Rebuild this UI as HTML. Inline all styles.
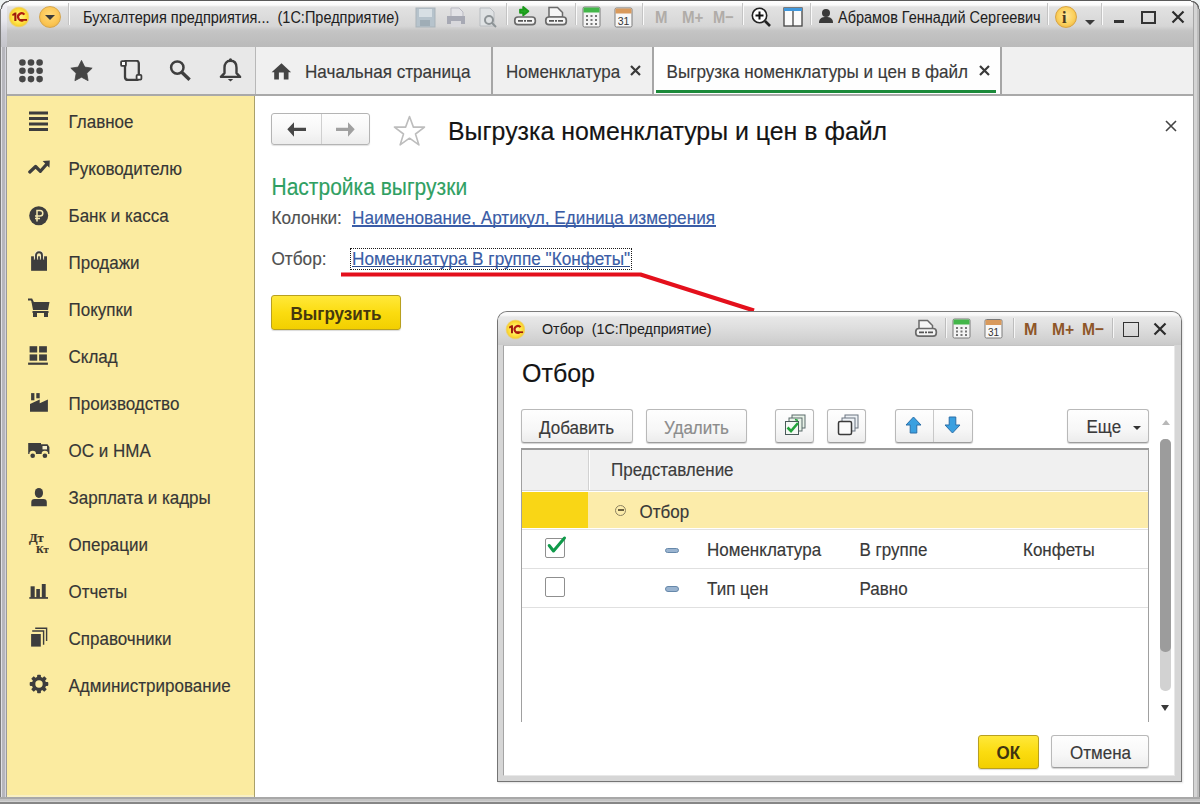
<!DOCTYPE html>
<html><head><meta charset="utf-8">
<style>
*{box-sizing:border-box;margin:0;padding:0}
html,body{width:1200px;height:804px;overflow:hidden;background:#fff}
body{position:relative;font-family:"Liberation Sans",sans-serif;color:#333}
.a{position:absolute}
.t{position:absolute;white-space:pre;line-height:1;-webkit-text-stroke:0.15px currentColor;transform-origin:0 85%;transform:translateY(0.7px) scaleY(1.1)}
.nt{-webkit-text-stroke:0.05px currentColor;transform:scaleY(1.08)}
.hd{-webkit-text-stroke:0.15px currentColor;transform:scaleY(1.04)}
</style></head><body>
<!-- window frame -->
<div class="a" style="left:0;top:0;width:1200px;height:804px;background:#c0c0c4"></div>
<div class="a" style="left:0;top:0;width:7px;height:804px;background:linear-gradient(90deg,#7c7c7c 0,#7c7c7c 1px,#e0e0e4 1px,#e0e0e4 2.5px,#b6b6bc 2.5px,#b6b6bc 5.5px,#d4d4dc 5.5px,#d4d4dc 6.5px,#9a9a9a 6.5px)"></div>
<div class="a" style="left:1193px;top:0;width:7px;height:804px;background:linear-gradient(90deg,#a6a6a6 0,#a6a6a6 1.5px,#d4d4d4 1.5px,#d4d4d4 4px,#bdbdbd 4px,#bdbdbd 6px,#858585 6px)"></div>
<div class="a" style="left:0;top:797px;width:1200px;height:7px;background:linear-gradient(180deg,#a8a8a8 0,#a8a8a8 2px,#c4c4c4 2px,#c4c4c4 4px,#d2d2d2 4px,#d2d2d2 5px,#868686 5px)"></div>
<!-- title bar -->
<div class="a" style="left:7px;top:0;width:1186px;height:47px;background:linear-gradient(180deg,#5a5a5a 0,#5a5a5a 1px,#fdfdfd 1px,#fbfbfb 5px,#e2e2e2 7px,#d6d6d6 26px,#c4c4c4 31px,#bababa 47px)"></div>


<!-- title bar content -->
<div class="a" style="left:1px;top:1px;width:6px;height:46px;background:linear-gradient(180deg,#f4f4f8 0,#e6e6ec 20px,#cfcfd6 32px,#c4c4ca 46px)"></div>
<div class="a" style="left:0;top:0;width:9px;height:9px;background:radial-gradient(circle at 9px 9px,transparent 6.5px,#6a6a6a 7.2px,#6a6a6a 8px,#eef2f2 8.6px)"></div>
<!-- 1C logo -->
<svg class="a" style="left:7.5px;top:6.2px" width="22.0" height="22.0" viewBox="0 0 22 22"><defs><radialGradient id="g1" cx="50%" cy="50%" r="50%"><stop offset="0" stop-color="#fff8a0"/><stop offset="0.55" stop-color="#ffe84a"/><stop offset="0.85" stop-color="#f8d030"/><stop offset="1" stop-color="#f0c848" stop-opacity="0.3"/></radialGradient></defs><circle cx="11" cy="11" r="10.5" fill="url(#g1)"/><path d="M4.2 8.2l2.6-1.6h1.6v8.4H6.3V9.2l-1.7 0.8z" fill="#9c1a0c"/><path d="M16.4 8.6a3.6 3.6 0 1 0-1.2 5.6" fill="none" stroke="#b01c10" stroke-width="2.2"/><path d="M12 13.9h7" stroke="#9c1a0c" stroke-width="1.8"/></svg>
<!-- dropdown circle -->
<div class="a" style="left:39px;top:6px;width:22px;height:22px;border-radius:50%;background:radial-gradient(circle at 50% 40%,#ffd97a 0,#fbc552 60%,#e9ac3c 100%);border:1px solid #d6a64c"></div>
<div class="a" style="left:45px;top:15px;width:0;height:0;border-left:5px solid transparent;border-right:5px solid transparent;border-top:5px solid #3a3a3a"></div>
<div class="a" style="left:68px;top:3px;width:1px;height:22px;background:#c4c4c4;box-shadow:1px 0 0 #fafafa"></div>
<div class="t nt" style="left:83px;top:10.5px;font-size:14.5px;color:#1e1e1e">Бухгалтерия предприятия...  (1С:Предприятие)</div>

<!-- disabled icons: save, print, preview -->
<svg class="a" style="left:415px;top:7px" width="22" height="21" viewBox="0 0 22 21"><rect x="1" y="1" width="19" height="19" fill="#b6c3cc" stroke="#a9b3ba"/><rect x="4" y="2" width="13" height="8" fill="#d7dfe4"/><rect x="5" y="13" width="10" height="6" fill="#9fadb6"/></svg>
<svg class="a" style="left:446px;top:7px" width="21" height="21" viewBox="0 0 21 21"><path d="M5 1h8l4 4v6H5z" fill="#e2e2e6" stroke="#b9b9c2"/><rect x="1" y="9" width="18" height="8" fill="#a7a9b4"/><rect x="5" y="14" width="10" height="6" fill="#d8d8dc"/></svg>
<svg class="a" style="left:478px;top:7px" width="21" height="21" viewBox="0 0 21 21"><path d="M2 1h10l4 4v14H2z" fill="#dfe2e4" stroke="#b8bcc0"/><circle cx="11" cy="13" r="4" fill="none" stroke="#8d9396" stroke-width="2"/><path d="M14 16l4 4" stroke="#8d9396" stroke-width="2"/></svg>
<div class="a" style="left:506px;top:3px;width:1px;height:22px;background:#c4c4c4;box-shadow:1px 0 0 #fafafa"></div>
<!-- attach green -->
<svg class="a" style="left:513px;top:5px" width="24" height="22" viewBox="0 0 24 22"><path d="M7 4.6h3.2V2l5.2 4.2-5.2 4.2V7.8H7z" fill="#22a822" stroke="#1a9a1a" stroke-width="1.8" stroke-linejoin="round"/><rect x="1.8" y="12" width="20.5" height="7.6" rx="3.2" fill="#f4f4f4" stroke="#6a6a6a" stroke-width="1.7"/><path d="M5 15.8h5M11 15.8h2M14 15.8h5" stroke="#555" stroke-width="1.8"/></svg>
<svg class="a" style="left:544px;top:5px" width="24" height="22" viewBox="0 0 24 22"><path d="M5 2.5h8.5l5 5V12H5z" fill="#f6f6f6" stroke="#6a6a6a" stroke-width="1.5"/><rect x="1.8" y="12" width="20.5" height="7.6" rx="3.2" fill="#f4f4f4" stroke="#6a6a6a" stroke-width="1.7"/><path d="M5 15.8h5M11 15.8h2M14 15.8h5" stroke="#555" stroke-width="1.8"/></svg>
<div class="a" style="left:575px;top:3px;width:1px;height:22px;background:#c4c4c4;box-shadow:1px 0 0 #fafafa"></div>
<!-- calculator -->
<svg class="a" style="left:582px;top:6px" width="19" height="22" viewBox="0 0 19 22"><rect x="1" y="1" width="17" height="20" rx="1.5" fill="#f4f4f4" stroke="#7a7a7a"/><rect x="1.5" y="1.5" width="16" height="5" fill="#43b649"/><g fill="#777"><rect x="4" y="9" width="2" height="2"/><rect x="8.5" y="9" width="2" height="2"/><rect x="13" y="9" width="2" height="2"/><rect x="4" y="13" width="2" height="2"/><rect x="8.5" y="13" width="2" height="2"/><rect x="13" y="13" width="2" height="2"/><rect x="4" y="17" width="2" height="2"/><rect x="8.5" y="17" width="2" height="2"/><rect x="13" y="17" width="2" height="2"/></g></svg>
<!-- calendar -->
<svg class="a" style="left:614px;top:6px" width="19" height="22" viewBox="0 0 19 22"><rect x="1" y="2" width="17" height="19" rx="1.5" fill="#f8f8f8" stroke="#7a7a7a"/><rect x="1.5" y="2.5" width="16" height="5" fill="#d99a5c"/><text x="9.5" y="18.5" font-family="Liberation Sans" font-size="10.5" text-anchor="middle" fill="#333">31</text></svg>
<div class="a" style="left:642px;top:3px;width:1px;height:22px;background:#c4c4c4;box-shadow:1px 0 0 #fafafa"></div>
<div class="t" style="left:654.5px;top:8.6px;font-size:17px;font-weight:bold;color:#b0aca8;-webkit-text-stroke:0;transform:scale(0.88,1.0)">M</div>
<div class="t" style="left:681.5px;top:8.6px;font-size:17px;font-weight:bold;color:#b0aca8;-webkit-text-stroke:0;transform:scale(0.89,1.0)">M+</div>
<div class="t" style="left:712.5px;top:8.6px;font-size:17px;font-weight:bold;color:#b0aca8;-webkit-text-stroke:0;transform:scale(0.86,1.0)">M−</div>
<div class="a" style="left:742px;top:3px;width:1px;height:22px;background:#c4c4c4;box-shadow:1px 0 0 #fafafa"></div>
<!-- zoom -->
<svg class="a" style="left:751px;top:7px" width="21" height="20" viewBox="0 0 21 20"><circle cx="8.5" cy="8.5" r="7.2" fill="#fff" stroke="#222" stroke-width="1.6"/><path d="M8.5 4.5v8M4.5 8.5h8" stroke="#111" stroke-width="2"/><path d="M14 14l5 5" stroke="#222" stroke-width="2.6"/></svg>
<!-- panel -->
<svg class="a" style="left:783px;top:7px" width="20" height="20" viewBox="0 0 20 20"><rect x="1" y="1" width="18" height="18" fill="#fbfbfb" stroke="#444" stroke-width="1.3"/><rect x="1" y="1" width="18" height="3" fill="#3f97dc"/><path d="M10 4v15" stroke="#444" stroke-width="1.3"/></svg>
<div class="a" style="left:810px;top:3px;width:1px;height:22px;background:#c4c4c4;box-shadow:1px 0 0 #fafafa"></div>
<svg class="a" style="left:819px;top:8px" width="14" height="16" viewBox="0 0 14 16"><circle cx="7" cy="5" r="4" fill="#3a3a3a"/><path d="M0 15c0-5 3-6 7-6s7 1 7 6z" fill="#3a3a3a"/></svg>
<div class="t nt" style="left:838px;top:10.5px;font-size:14.5px;color:#1e1e1e">Абрамов Геннадий Сергеевич</div>
<div class="a" style="left:1047px;top:3px;width:1px;height:22px;background:#c4c4c4;box-shadow:1px 0 0 #fafafa"></div>
<!-- info -->
<div class="a" style="left:1055px;top:6px;width:22px;height:22px;border-radius:50%;background:radial-gradient(circle at 50% 45%,#ffe79a 0,#fbd05c 55%,#e6a935 100%);border:1px solid #d9a440"></div>
<div class="t" style="left:1062px;top:9px;font-size:16px;font-weight:bold;font-family:'Liberation Serif';color:#4a3a20">i</div>
<div class="a" style="left:1085px;top:20px;width:0;height:0;border-left:5.5px solid transparent;border-right:5.5px solid transparent;border-top:5px solid #3a3a3a"></div>
<div class="a" style="left:1101px;top:3px;width:1px;height:22px;background:#c4c4c4;box-shadow:1px 0 0 #fafafa"></div>
<div class="a" style="left:1114px;top:20px;width:10px;height:3px;background:#333"></div>
<div class="a" style="left:1141px;top:11px;width:15px;height:13px;border:2px solid #333;border-top-width:2px"></div>
<svg class="a" style="left:1171px;top:10px" width="14" height="14" viewBox="0 0 14 14"><path d="M1.5 1.5l11 11M12.5 1.5l-11 11" stroke="#2c2c2c" stroke-width="2.2"/></svg>

<div class="a" style="left:1191px;top:0;width:9px;height:9px;background:radial-gradient(circle at 0 9px,transparent 6.5px,#6a6a6a 7.2px,#6a6a6a 8px,#eef2f2 8.6px)"></div>
<!-- left toolbar -->
<div class="a" style="left:7px;top:47px;width:248px;height:47px;background:#e8e8e8"></div>
<svg class="a" style="left:19px;top:58.5px" width="25" height="24" viewBox="0 0 25 24"><g fill="#474747"><circle cx="3.4" cy="3.5" r="3.3"/><circle cx="12" cy="3.5" r="3.3"/><circle cx="20.6" cy="3.5" r="3.3"/><circle cx="3.4" cy="11.8" r="3.3"/><circle cx="12" cy="11.8" r="3.3"/><circle cx="20.6" cy="11.8" r="3.3"/><circle cx="3.4" cy="20.1" r="3.3"/><circle cx="12" cy="20.1" r="3.3"/><circle cx="20.6" cy="20.1" r="3.3"/></g></svg>
<svg class="a" style="left:70px;top:59.5px" width="23" height="23" viewBox="0 0 23 23"><path d="M11.50,0.40 L14.79,7.07 L22.15,8.14 L16.83,13.33 L18.08,20.66 L11.50,17.20 L4.92,20.66 L6.17,13.33 L0.85,8.14 L8.21,7.07Z" fill="#454545" stroke="#454545" stroke-width="0.8" stroke-linejoin="round"/></svg>
<svg class="a" style="left:120px;top:60px" width="23" height="21" viewBox="0 0 23 21"><path d="M5 3.5V2.3a1.6 1.6 0 0 1 1.6-1.6h9.6a2.6 2.6 0 0 1 2.6 2.6v14.2" fill="none" stroke="#3e3e3e" stroke-width="2.3"/><path d="M5 3.5v13.6a2.9 2.9 0 0 0 2.9 2.9h10.6" fill="none" stroke="#3e3e3e" stroke-width="2.3"/><rect x="1.1" y="1.1" width="4.8" height="4.8" rx="1" fill="#fff" stroke="#3e3e3e" stroke-width="1.8"/><rect x="16.6" y="14.8" width="4.8" height="4.8" rx="1" fill="#fff" stroke="#3e3e3e" stroke-width="1.8"/></svg>
<svg class="a" style="left:169px;top:60px" width="23" height="21" viewBox="0 0 23 21"><circle cx="8.3" cy="7.6" r="6.2" fill="none" stroke="#3e3e3e" stroke-width="2.5"/><path d="M12.8 12.3l7.8 7.4" stroke="#3e3e3e" stroke-width="3.4"/></svg>
<svg class="a" style="left:219px;top:58px" width="23" height="24" viewBox="0 0 23 24"><path d="M11.5 2.8c-4 0-6 3-6 7v5.3l-3.6 3.8h19.2l-3.6-3.8V9.8c0-4-2-7-6-7z" fill="none" stroke="#3e3e3e" stroke-width="2.4" stroke-linejoin="round"/><circle cx="11.5" cy="1.9" r="1.6" fill="#3e3e3e"/><path d="M8.8 21h5.4l-2.7 2.6z" fill="#3e3e3e"/></svg>

<!-- tabs row -->
<div class="a" style="left:255px;top:47px;width:938px;height:47px;background:#f0f0f0"></div>
<div class="a" style="left:255px;top:47px;width:1px;height:47px;background:#b8b8b8"></div>
<div class="a" style="left:491px;top:47px;width:2px;height:47px;background:#a6a6a6"></div>
<div class="a" style="left:652px;top:47px;width:2px;height:47px;background:#a6a6a6"></div>
<div class="a" style="left:654px;top:47px;width:346px;height:47px;background:#fefefe"></div>
<div class="a" style="left:1000px;top:47px;width:2px;height:47px;background:#a6a6a6"></div>
<svg class="a" style="left:271px;top:62.5px" width="21" height="18" viewBox="0 0 21 18"><path d="M10.5 0.3L0.6 9.2h2.6v7.4h4.7V9.6h4.9v7h4.7V9.2h2.6z" fill="#444"/></svg>
<div class="t" style="left:305px;top:63px;font-size:17.1px;color:#3a3a3a">Начальная страница</div>
<div class="t" style="left:506px;top:63px;font-size:17px;color:#3a3a3a">Номенклатура</div>
<svg class="a" style="left:630px;top:65px" width="11" height="11" viewBox="0 0 11 11"><path d="M1 1l9 9M10 1l-9 9" stroke="#3a3a3a" stroke-width="2.2"/></svg>
<div class="t" style="left:666.5px;top:63px;font-size:17.1px;color:#3a3a3a">Выгрузка номенклатуры и цен в файл</div>
<svg class="a" style="left:979px;top:65px" width="11" height="11" viewBox="0 0 11 11"><path d="M1 1l9 9M10 1l-9 9" stroke="#3a3a3a" stroke-width="2.2"/></svg>
<div class="a" style="left:656px;top:89.5px;width:340px;height:3px;background:#1b8a3a"></div>
<div class="a" style="left:7px;top:94px;width:1186px;height:2px;background:#a9a9a9"></div>

<!-- sidebar -->
<div class="a" style="left:7px;top:96px;width:248px;height:701px;background:#fbeba0"></div>
<div class="a" style="left:253.5px;top:96px;width:1.5px;height:701px;background:#aaa06a"></div><div class="a" style="left:7px;top:794.5px;width:246.5px;height:2px;background:#f8f0c4"></div>
<svg class="a" style="left:29px;top:111px" width="20" height="20" viewBox="0 0 20 20"><g fill="#3d3d3d"><rect x="0" y="0.5" width="19" height="3"/><rect x="0" y="6" width="19" height="3"/><rect x="0" y="11.5" width="19" height="3"/><rect x="0" y="17" width="19" height="3"/></g></svg>
<div class="t" style="left:68.5px;top:112.6px;font-size:17px;color:#363636">Главное</div>
<svg class="a" style="left:28px;top:160px" width="23" height="16" viewBox="0 0 23 16"><path d="M1.8 12L7.6 6.5l4.8 4.8L18.6 4.2" fill="none" stroke="#3d3d3d" stroke-width="3.2" stroke-linecap="round" stroke-linejoin="round"/><path d="M14.6 1L21.8 0.6L21.4 7.8Z" fill="#3d3d3d"/></svg>
<div class="t" style="left:68.5px;top:159.6px;font-size:17px;color:#363636">Руководителю</div>
<svg class="a" style="left:29px;top:205.5px" width="20" height="20" viewBox="0 0 20 20"><circle cx="9.7" cy="9.7" r="9.5" fill="#3d3d3d"/><path d="M8 15.5V4.5h3a2.8 2.8 0 0 1 0 5.6H6M6 12.6h5" fill="none" stroke="#f5e9b0" stroke-width="1.5"/></svg>
<div class="t" style="left:68.5px;top:206.6px;font-size:17px;color:#363636">Банк и касса</div>
<svg class="a" style="left:30px;top:250px" width="18" height="22" viewBox="0 0 18 22"><rect x="1.1" y="6.3" width="15.9" height="14.5" fill="#3d3d3d"/><path d="M6 10V5.2a3 3 0 0 1 6 0V10" fill="none" stroke="#f5ecc0" stroke-width="4.2"/><path d="M6 10V5.2a3 3 0 0 1 6 0V10" fill="none" stroke="#3d3d3d" stroke-width="1.9"/><path d="M4.5 9.5h3M10.5 9.5h3" stroke="#3d3d3d" stroke-width="1.5"/></svg>
<div class="t" style="left:68.5px;top:253.6px;font-size:17px;color:#363636">Продажи</div>
<svg class="a" style="left:28px;top:298px" width="22" height="20" viewBox="0 0 22 20"><path d="M0 1.5h3.5l1.5 3" fill="none" stroke="#3d3d3d" stroke-width="2"/><path d="M3.5 4h18l-1.5 8H5z" fill="#3d3d3d"/><rect x="4.5" y="13" width="16" height="2" fill="#3d3d3d"/><rect x="5" y="15" width="4" height="4" fill="#3d3d3d"/><rect x="16" y="15" width="4" height="4" fill="#3d3d3d"/></svg>
<div class="t" style="left:68.5px;top:300.6px;font-size:17px;color:#363636">Покупки</div>
<svg class="a" style="left:28px;top:346px" width="21" height="19" viewBox="0 0 21 19"><g fill="#3d3d3d"><rect x="1.6" y="0.2" width="7.6" height="6.3"/><rect x="11.1" y="0.2" width="7.8" height="6.3"/><rect x="1.6" y="8.4" width="7.6" height="6.3"/><rect x="11.1" y="8.4" width="7.8" height="6.3"/><rect x="0.1" y="16.6" width="19.8" height="2.2"/></g></svg>
<div class="t" style="left:68.5px;top:347.6px;font-size:17px;color:#363636">Склад</div>
<svg class="a" style="left:29px;top:392px" width="20" height="20" viewBox="0 0 20 20"><g fill="#3d3d3d"><rect x="2.1" y="1.1" width="3.3" height="7.2"/><rect x="7.3" y="1.1" width="3.4" height="5.2"/><path d="M1 19.7V11.9L10.7 7.4V11.2L18.9 7.4V19.7Z"/></g></svg>
<div class="t" style="left:68.5px;top:394.6px;font-size:17px;color:#363636">Производство</div>
<svg class="a" style="left:28px;top:442px" width="22" height="17" viewBox="0 0 22 17"><path d="M0.2 1H13V2.2H19.5L21.4 5V12H20.2A3.3 3.3 0 0 0 13.6 12H8A3.3 3.3 0 0 0 1.4 12H0.2Z" fill="#3d3d3d"/><rect x="14.5" y="4" width="4.5" height="3.4" fill="#f5eec8"/><circle cx="4.7" cy="13.8" r="2.3" fill="#3d3d3d"/><circle cx="16.9" cy="13.8" r="2.3" fill="#3d3d3d"/></svg>
<div class="t" style="left:68.5px;top:441.6px;font-size:17px;color:#363636">ОС и НМА</div>
<svg class="a" style="left:30px;top:486.5px" width="19" height="20" viewBox="0 0 19 20"><ellipse cx="8.9" cy="5.9" rx="4.1" ry="5" fill="#3d3d3d"/><path d="M1.3 19.2V15.3A3.3 3.3 0 0 1 4.6 12H13.5A3.3 3.3 0 0 1 16.8 15.3V19.2Z" fill="#3d3d3d"/></svg>
<div class="t" style="left:68.5px;top:488.6px;font-size:17px;color:#363636">Зарплата и кадры</div>
<div class="t" style="left:29px;top:531.5px;font-size:12.5px;font-weight:bold;font-family:'Liberation Serif';color:#3a3428;-webkit-text-stroke:0.2px currentColor;transform:scale(1.0,0.92)">Дт</div><div class="t" style="left:36px;top:542.5px;font-size:12.5px;font-weight:bold;font-family:'Liberation Serif';color:#3a3428;-webkit-text-stroke:0.2px currentColor;transform:scale(0.85,0.9)">Кт</div>
<div class="t" style="left:68.5px;top:535.6px;font-size:17px;color:#363636">Операции</div>
<svg class="a" style="left:29px;top:583px" width="20" height="17" viewBox="0 0 20 17"><g fill="#3d3d3d"><rect x="1.6" y="3.3" width="4.1" height="11.5"/><rect x="7.3" y="6" width="3.6" height="8.8"/><rect x="12.8" y="1" width="3.9" height="13.8"/><rect x="0.3" y="14.1" width="18.7" height="1.7"/></g></svg>
<div class="t" style="left:68.5px;top:582.6px;font-size:17px;color:#363636">Отчеты</div>
<svg class="a" style="left:30px;top:627px" width="18" height="21" viewBox="0 0 18 21"><path d="M5.2 1.3H16.6V14" fill="none" stroke="#3d3d3d" stroke-width="1.4"/><path d="M2.2 4H13.6V17.8" fill="none" stroke="#3d3d3d" stroke-width="1.4"/><rect x="1.1" y="7" width="9.7" height="12.6" fill="#3d3d3d"/></svg>
<div class="t" style="left:68.5px;top:629.6px;font-size:17px;color:#363636">Справочники</div>
<svg class="a" style="left:29px;top:674.3px" width="20" height="20" viewBox="-10 -10 20 20"><g fill="#3d3d3d"><circle r="7.2"/><rect x="-1.9" y="-9.3" width="3.8" height="5" rx="0.8" transform="rotate(0)"/><rect x="-1.9" y="-9.3" width="3.8" height="5" rx="0.8" transform="rotate(45)"/><rect x="-1.9" y="-9.3" width="3.8" height="5" rx="0.8" transform="rotate(90)"/><rect x="-1.9" y="-9.3" width="3.8" height="5" rx="0.8" transform="rotate(135)"/><rect x="-1.9" y="-9.3" width="3.8" height="5" rx="0.8" transform="rotate(180)"/><rect x="-1.9" y="-9.3" width="3.8" height="5" rx="0.8" transform="rotate(225)"/><rect x="-1.9" y="-9.3" width="3.8" height="5" rx="0.8" transform="rotate(270)"/><rect x="-1.9" y="-9.3" width="3.8" height="5" rx="0.8" transform="rotate(315)"/></g><circle r="3.7" fill="#fbeba0"/></svg>
<div class="t" style="left:68.5px;top:676.6px;font-size:17px;color:#363636">Администрирование</div>

<!-- main content -->
<div class="a" style="left:255px;top:96px;width:938px;height:701px;background:#fff"></div>
<!-- nav buttons -->
<div class="a" style="left:271px;top:113px;width:99px;height:32px;border:1px solid #b4b4b4;border-radius:3px;background:linear-gradient(180deg,#fefefe 0,#f6f6f6 60%,#ececec 100%);box-shadow:0 1px 1px rgba(0,0,0,.12)"></div>
<div class="a" style="left:321px;top:114px;width:1px;height:30px;background:#cfcfcf"></div>
<svg class="a" style="left:287px;top:122px" width="20" height="15" viewBox="0 0 20 15"><path d="M0.3 7.3L7 0.2v5.6h12v3.2H7v5.8z" fill="#474747"/></svg>
<svg class="a" style="left:335px;top:122px" width="20" height="15" viewBox="0 0 20 15"><path d="M19.7 7.3L13 0.2v5.6H1v3.2h12v5.8z" fill="#a0a0a0"/></svg>
<svg class="a" style="left:393px;top:115px" width="33" height="31" viewBox="0 0 33 31"><path d="M16.5 1.5l3.9 10.6h11.1l-9 6.9 3.4 10.9-9.4-6.7-9.4 6.7 3.4-10.9-9-6.9h11.1z" fill="none" stroke="#bdbdbd" stroke-width="1.6" stroke-linejoin="round"/></svg>
<div class="t hd" style="left:448px;top:118.9px;font-size:24.9px;color:#141414">Выгрузка номенклатуры и цен в файл</div>
<svg class="a" style="left:1165px;top:120px" width="12" height="12" viewBox="0 0 12 12"><path d="M1 1l10 10M11 1L1 11" stroke="#444" stroke-width="1.6"/></svg>

<div class="t" style="left:271.5px;top:176.3px;font-size:21px;color:#2f9f62;-webkit-text-stroke:0.15px currentColor">Настройка выгрузки</div>
<div class="t" style="left:271.5px;top:208.9px;font-size:17.2px;color:#505050">Колонки:</div>
<div class="t" style="left:352px;top:208.9px;font-size:17.2px;color:#3a5ca6">Наименование, Артикул, Единица измерения</div>
<div class="a" style="left:352px;top:225px;width:364px;height:1.5px;background:#3a5ca6"></div>
<div class="t" style="left:271.5px;top:249.6px;font-size:17.2px;color:#505050">Отбор:</div>
<div class="a" style="left:350px;top:247.5px;width:282px;height:22px;border:1.3px dotted #1a1a1a"></div>
<div class="t" style="left:352px;top:249.6px;font-size:17.2px;color:#3a5ca6">Номенклатура В группе "Конфеты"</div>
<div class="a" style="left:352px;top:265.8px;width:278px;height:1.5px;background:#2c4a8a"></div>

<div class="a" style="left:271px;top:295px;width:130px;height:35px;border:1px solid #b8a020;border-radius:3px;background:linear-gradient(180deg,#ffe83a 0,#fbdc10 50%,#f2cf00 100%);box-shadow:0 1px 1px rgba(0,0,0,.15)"></div>
<div class="t" style="left:290.5px;top:304.9px;font-size:17px;font-weight:bold;color:#46380e;-webkit-text-stroke:0">Выгрузить</div>

<!-- red annotation -->
<svg class="a" style="left:0;top:0" width="1200" height="804" viewBox="0 0 1200 804"><path d="M341 274.5H640.5L754 310.5" fill="none" stroke="#e4101c" stroke-width="4" stroke-linejoin="round"/></svg>

<!-- DIALOG -->
<div class="a" style="left:497px;top:311px;width:685px;height:471px;border:1px solid #747474;border-top:1.5px solid #7c7c7c;border-radius:10px 10px 0 0;background:#d6d6d6;box-shadow:1px 1px 2px rgba(0,0,0,.12)"></div>
<div class="a" style="left:498px;top:312px;width:683px;height:33px;border-radius:9px 9px 0 0;background:linear-gradient(180deg,#f8f8f8 0,#fafafa 3px,#e8e8e8 5px,#dedede 16px,#d2d2d2 27px,#cacaca 33px)"></div>
<div class="a" style="left:503px;top:344.5px;width:672px;height:431px;background:#fff;border:1px solid #a4a4a4;border-top-color:#c4c4c4;border-right-color:#e8e8e8;border-bottom-color:#e8e8e8"></div>
<!-- dialog title -->
<svg class="a" style="left:504.5px;top:319px" width="20.9" height="20.9" viewBox="0 0 22 22"><defs><radialGradient id="g2" cx="50%" cy="50%" r="50%"><stop offset="0" stop-color="#fff8a0"/><stop offset="0.55" stop-color="#ffe84a"/><stop offset="0.85" stop-color="#f8d030"/><stop offset="1" stop-color="#f0c848" stop-opacity="0.3"/></radialGradient></defs><circle cx="11" cy="11" r="10.5" fill="url(#g2)"/><path d="M4.2 8.2l2.6-1.6h1.6v8.4H6.3V9.2l-1.7 0.8z" fill="#9c1a0c"/><path d="M16.4 8.6a3.6 3.6 0 1 0-1.2 5.6" fill="none" stroke="#b01c10" stroke-width="2.2"/><path d="M12 13.9h7" stroke="#9c1a0c" stroke-width="1.8"/></svg>

<div class="t nt" style="left:542px;top:321.7px;font-size:14.3px;color:#1e1e1e">Отбор  (1С:Предприятие)</div>
<svg class="a" style="left:914px;top:319px" width="24" height="19" viewBox="0 0 24 19"><path d="M5 1.5h8.5l5 5V10H5z" fill="#f6f6f6" stroke="#6a6a6a" stroke-width="1.5"/><rect x="1.8" y="9.5" width="20.5" height="7.6" rx="3.2" fill="#f4f4f4" stroke="#6a6a6a" stroke-width="1.7"/><path d="M5 13.3h5M11 13.3h2M14 13.3h5" stroke="#555" stroke-width="1.8"/></svg>
<div class="a" style="left:945px;top:318px;width:1px;height:20px;background:#bdbdbd;box-shadow:1px 0 0 #f6f6f6"></div>
<svg class="a" style="left:952px;top:318px" width="19" height="21" viewBox="0 0 19 21"><rect x="1" y="1" width="17" height="19" rx="1.5" fill="#f4f4f4" stroke="#7a7a7a"/><rect x="1.5" y="1.5" width="16" height="5" fill="#43b649"/><g fill="#777"><rect x="4" y="9" width="2" height="2"/><rect x="8.5" y="9" width="2" height="2"/><rect x="13" y="9" width="2" height="2"/><rect x="4" y="12.5" width="2" height="2"/><rect x="8.5" y="12.5" width="2" height="2"/><rect x="13" y="12.5" width="2" height="2"/><rect x="4" y="16" width="2" height="2"/><rect x="8.5" y="16" width="2" height="2"/><rect x="13" y="16" width="2" height="2"/></g></svg>
<svg class="a" style="left:984px;top:318px" width="19" height="21" viewBox="0 0 19 21"><rect x="1" y="1.5" width="17" height="18.5" rx="1.5" fill="#f8f8f8" stroke="#7a7a7a"/><rect x="1.5" y="2" width="16" height="5" fill="#d99a5c"/><text x="9.5" y="17.5" font-family="Liberation Sans" font-size="10" text-anchor="middle" fill="#333">31</text></svg>
<div class="a" style="left:1013px;top:318px;width:1px;height:20px;background:#bdbdbd;box-shadow:1px 0 0 #f6f6f6"></div>
<div class="t" style="left:1024.4px;top:321.1px;font-size:17px;font-weight:bold;color:#8e5628;-webkit-text-stroke:0;transform:scale(0.95,1.0)">M</div>
<div class="t" style="left:1051.5px;top:321.1px;font-size:17px;font-weight:bold;color:#8e5628;-webkit-text-stroke:0;transform:scale(0.92,1.0)">M+</div>
<div class="t" style="left:1081.5px;top:321.1px;font-size:17px;font-weight:bold;color:#8e5628;-webkit-text-stroke:0;transform:scale(0.92,1.0)">M−</div>
<div class="a" style="left:1112px;top:318px;width:1px;height:20px;background:#bdbdbd;box-shadow:1px 0 0 #f6f6f6"></div>
<div class="a" style="left:1123px;top:322px;width:16px;height:14.5px;border:1.8px solid #333"></div>
<svg class="a" style="left:1153px;top:322px" width="14" height="14" viewBox="0 0 14 14"><path d="M1.5 1.5l11 11M12.5 1.5l-11 11" stroke="#2c2c2c" stroke-width="2.2"/></svg>

<!-- dialog body -->
<div class="t hd" style="left:522px;top:360.8px;font-size:25px;color:#141414">Отбор</div>
<div class="a" style="left:521px;top:408.5px;width:112px;height:34px;border:1px solid #b9b9b9;border-bottom-color:#9d9d9d;border-radius:3px;background:linear-gradient(180deg,#fefefe 0,#f7f7f7 60%,#ececec 100%);box-shadow:0 1px 1px rgba(0,0,0,.18)"></div>
<div class="t" style="left:539px;top:418.6px;font-size:17px;color:#3a3a3a">Добавить</div>
<div class="a" style="left:646px;top:408.5px;width:101px;height:34px;border:1px solid #b9b9b9;border-bottom-color:#9d9d9d;border-radius:3px;background:linear-gradient(180deg,#fefefe 0,#f7f7f7 60%,#ececec 100%);box-shadow:0 1px 1px rgba(0,0,0,.18)"></div>
<div class="t" style="left:664px;top:418.6px;font-size:17px;color:#8c8c8c">Удалить</div>
<div class="a" style="left:775px;top:408.5px;width:39px;height:34px;border:1px solid #b9b9b9;border-bottom-color:#9d9d9d;border-radius:3px;background:linear-gradient(180deg,#fefefe 0,#f7f7f7 60%,#ececec 100%);box-shadow:0 1px 1px rgba(0,0,0,.18)"></div>
<svg class="a" style="left:784px;top:414px" width="23" height="22" viewBox="0 0 23 22"><rect x="8" y="1" width="13" height="13" fill="#e8f2e8" stroke="#5a6a6a"/><rect x="5" y="4" width="13" height="13" fill="#e8f2e8" stroke="#5a6a6a"/><rect x="1.5" y="7.5" width="13" height="13" fill="#f4f8f4" stroke="#4a5a5a"/><path d="M3.5 13.5l3.5 3.5 7-8" fill="none" stroke="#22a33a" stroke-width="2.6"/><path d="M11 5.5l3 1" stroke="#22a33a" stroke-width="1.5"/></svg>
<div class="a" style="left:827px;top:408.5px;width:39px;height:34px;border:1px solid #b9b9b9;border-bottom-color:#9d9d9d;border-radius:3px;background:linear-gradient(180deg,#fefefe 0,#f7f7f7 60%,#ececec 100%);box-shadow:0 1px 1px rgba(0,0,0,.18)"></div>
<svg class="a" style="left:837px;top:414px" width="22" height="22" viewBox="0 0 22 22"><rect x="8" y="1" width="13" height="13" fill="#eef2f6" stroke="#6a7480"/><rect x="5" y="4" width="13" height="13" fill="#eef2f6" stroke="#6a7480"/><rect x="1.5" y="7.5" width="13" height="13" rx="1.5" fill="#fafafa" stroke="#3a3a3a" stroke-width="1.5"/></svg>
<div class="a" style="left:895px;top:408.5px;width:78px;height:34px;border:1px solid #b9b9b9;border-bottom-color:#9d9d9d;border-radius:3px;background:linear-gradient(180deg,#fefefe 0,#f7f7f7 60%,#ececec 100%);box-shadow:0 1px 1px rgba(0,0,0,.18)"></div>
<div class="a" style="left:933px;top:409.5px;width:1px;height:32px;background:#c8c8c8"></div>
<svg class="a" style="left:905px;top:416px" width="17" height="18" viewBox="0 0 17 18"><path d="M8.5 1L1 9h4.2v8h6.6V9H16z" fill="#3aa0e0" stroke="#2a6ea8" stroke-width="1"/></svg>
<svg class="a" style="left:944px;top:416px" width="17" height="18" viewBox="0 0 17 18"><path d="M8.5 17L1 9h4.2V1h6.6v8H16z" fill="#3aa0e0" stroke="#2a6ea8" stroke-width="1"/></svg>
<div class="a" style="left:1067px;top:408.5px;width:82px;height:34px;border:1px solid #b9b9b9;border-bottom-color:#9d9d9d;border-radius:3px;background:linear-gradient(180deg,#fefefe 0,#f7f7f7 60%,#ececec 100%);box-shadow:0 1px 1px rgba(0,0,0,.18)"></div>
<div class="t" style="left:1086.5px;top:417.6px;font-size:17px;color:#3a3a3a">Еще</div>
<div class="a" style="left:1132.5px;top:425.5px;width:0;height:0;border-left:4px solid transparent;border-right:4px solid transparent;border-top:4.5px solid #333"></div>
<div class="a" style="left:521px;top:448px;width:628px;height:274px;border:1px solid #a0a0a0;border-top:2px solid #9a9a9a;border-bottom:none"></div>
<div class="a" style="left:522px;top:450px;width:626px;height:40px;background:#f0f0f0"></div>
<div class="a" style="left:522px;top:490px;width:626px;height:1px;background:#d6d6d6"></div>
<div class="a" style="left:588px;top:450px;width:1px;height:40px;background:#d2d2d2;box-shadow:1px 0 0 #fff"></div>
<div class="a" style="left:522px;top:492px;width:66px;height:36px;background:#f9d616"></div>
<div class="a" style="left:588px;top:492px;width:560px;height:36px;background:#fcecaa"></div>
<div class="a" style="left:522px;top:528.5px;width:626px;height:1px;background:#e2e2e2"></div>
<div class="a" style="left:522px;top:568px;width:626px;height:1px;background:#e0e0e0"></div>
<div class="a" style="left:522px;top:606.5px;width:626px;height:1px;background:#e0e0e0"></div>
<div class="t" style="left:611px;top:460.6px;font-size:17px;color:#3c3c3c">Представление</div>
<div class="a" style="left:615px;top:504.5px;width:11px;height:11px;border-radius:50%;border:1.3px solid #8a8060"></div><div class="a" style="left:617.5px;top:509.3px;width:6px;height:1.4px;background:#6a6040"></div>
<div class="t" style="left:639.5px;top:502.6px;font-size:17px;color:#383838">Отбор</div>
<div class="a" style="left:545px;top:538px;width:20px;height:20px;border:1.3px solid #8f8f8f;border-radius:2px;background:#fff"></div>
<svg class="a" style="left:546px;top:534px" width="21" height="22" viewBox="0 0 21 22"><path d="M3.2 11.5l4.3 5.5L18.5 4" fill="none" stroke="#0f9a4a" stroke-width="3" stroke-linecap="round" stroke-linejoin="round"/></svg>
<div class="a" style="left:545px;top:577px;width:20px;height:20px;border:1.3px solid #8f8f8f;border-radius:2px;background:#fff"></div>
<div class="a" style="left:665px;top:547.5px;width:14px;height:5.5px;border-radius:3px;background:#9ab4d0;border:1px solid #6688aa"></div>
<div class="a" style="left:665px;top:586px;width:14px;height:5.5px;border-radius:3px;background:#9ab4d0;border:1px solid #6688aa"></div>
<div class="t" style="left:707px;top:541.4px;font-size:17px;color:#383838">Номенклатура</div>
<div class="t" style="left:859.5px;top:541.4px;font-size:17px;color:#383838">В группе</div>
<div class="t" style="left:1023px;top:541.4px;font-size:17px;color:#383838">Конфеты</div>
<div class="t" style="left:707px;top:580.3px;font-size:17px;color:#383838">Тип цен</div>
<div class="t" style="left:859.5px;top:580.3px;font-size:17px;color:#383838">Равно</div>
<div class="a" style="left:1161.5px;top:420px;width:0;height:0;border-left:4px solid transparent;border-right:4px solid transparent;border-bottom:5px solid #b8b8b8"></div>
<div class="a" style="left:1160px;top:439px;width:10.5px;height:252px;border-radius:5px;background:#d2d2d2"></div>
<div class="a" style="left:1160px;top:439px;width:10.5px;height:213px;border-radius:5px;background:#9c9c9c"></div>
<div class="a" style="left:1161px;top:704.5px;width:0;height:0;border-left:4.5px solid transparent;border-right:4.5px solid transparent;border-top:6px solid #3a3a3a"></div>
<div class="a" style="left:977.5px;top:734.5px;width:61px;height:34px;border:1px solid #b8a020;border-radius:3px;background:linear-gradient(180deg,#ffe83a 0,#fbdc10 50%,#f2cf00 100%);box-shadow:0 1px 1px rgba(0,0,0,.15)"></div>
<div class="t" style="left:996.5px;top:743.9px;font-size:17px;font-weight:bold;color:#3f3410;-webkit-text-stroke:0">ОК</div>
<div class="a" style="left:1051px;top:735px;width:98px;height:33px;border:1px solid #b9b9b9;border-bottom-color:#9d9d9d;border-radius:3px;background:linear-gradient(180deg,#fefefe 0,#f7f7f7 60%,#ececec 100%);box-shadow:0 1px 1px rgba(0,0,0,.18)"></div>
<div class="t" style="left:1070px;top:743.9px;font-size:17px;color:#3a3a3a">Отмена</div>
</body></html>
